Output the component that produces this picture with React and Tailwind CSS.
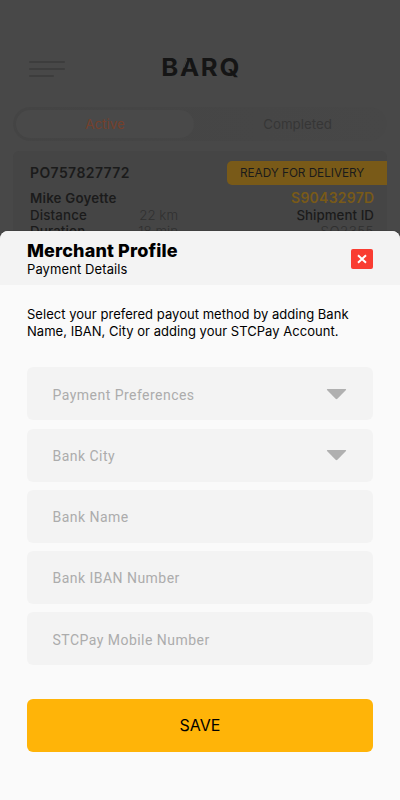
import React, { useState } from 'react';

const campos = [
  { id: 'preferences', label: 'Payment Preferences', select: true },
  { id: 'city', label: 'Bank City', select: true },
  { id: 'bank', label: 'Bank Name' },
  { id: 'iban', label: 'Bank IBAN Number' },
  { id: 'stcpay', label: 'STCPay Mobile Number' },
];

const Orders = () => (
  <div className="h-[231px] overflow-hidden bg-[#484848] text-[#1b1b1b]">
    {/* Top bar */}
    <div className="h-[107px] pt-[55px] flex items-start">
      <div className="w-[157px] pl-[29px] pt-[6px]">
        <div className="w-9 h-[2px] bg-[#3d3d3d] rounded-full"></div>
        <div className="w-9 h-[2px] mt-[5px] bg-[#3d3d3d] rounded-full"></div>
        <div className="w-[25px] h-[2px] mt-[5px] bg-[#3d3d3d] rounded-full"></div>
      </div>
      <h1 className="relative pl-[4px] text-[24px] leading-[26px] font-bold tracking-[1.6px] text-[#151515] origin-left scale-x-[1.07]">
        BARQ
        {/* stencil cut on the left leg of the A */}
        <span className="absolute left-[26px] top-[4px] w-[1.3px] h-[9px] bg-[#484848] rotate-[20deg]"></span>
      </h1>
    </div>

    {/* Tabs */}
    <div className="mx-[13px] h-[34px] rounded-full bg-linear-to-r from-[#444444] to-[#474747] flex items-center p-[3px]">
      <div className="w-[178px] h-7 rounded-full bg-[#494949] flex items-center justify-center pt-[2px] text-[13.3px] text-[#75402b]">Active</div>
      <div className="flex-1 pl-[17px] pt-[2px] text-center text-[13.3px] text-[#363636]">Completed</div>
    </div>

    {/* Shipment card */}
    <div className="mx-[13px] mt-[10px] h-[100px] rounded-md bg-[#454545] pt-[10px] pl-[17px]">
      <div className="flex items-center justify-between">
        <span className="pb-[2px] text-[14px] font-semibold tracking-[0.4px]">PO757827772</span>
        <span className="w-[160.5px] h-6 rounded-l-[5px] bg-[#795a18] flex items-center pl-[13.5px] pt-px text-[11.8px] tracking-[-0.05px]">READY FOR DELIVERY</span>
      </div>
      <div className="mt-[5px] pr-[13px] flex justify-between text-[13.3px] leading-[16.7px]">
        <div className="w-[148px]">
          <p className="font-semibold tracking-[0.2px]">Mike Goyette</p>
          <p className="flex justify-between font-medium tracking-[0.15px]">Distance <span className="font-light tracking-normal text-[#303030]">22 km</span></p>
          <p className="flex justify-between font-medium tracking-[0.15px]">Duration <span className="font-light tracking-normal text-[#303030]">18 min</span></p>
        </div>
        <div className="text-right">
          <p className="font-semibold text-[14px] tracking-[0.25px] -mr-[0.4px] text-[#795a18]">S9043297D</p>
          <p className="font-medium tracking-[0.05px]">Shipment ID</p>
          <p className="font-light tracking-[0.5px] text-[#303030]">SO2355</p>
        </div>
      </div>
    </div>
  </div>
);

const App = () => {
  const [valores, setValores] = useState({});

  return (
    <div className="w-[400px] h-[800px] overflow-hidden bg-[#484848] font-['Inter',sans-serif]">
      <Orders />

      <div className="relative h-[569px] rounded-t-lg overflow-hidden bg-[#fafafa] text-black shadow-[0_0_1px_#1c1c1c]">
        <div className="h-[54px] bg-[#f3f3f3] pl-[27px] pr-[27px] pt-[9px] flex justify-between">
          <div>
            <h2 className="text-[18px] leading-[22px] font-extrabold tracking-[0.14px]">Merchant Profile</h2>
            <p className="text-[13px] leading-[15px] tracking-[0.1px]">Payment Details</p>
          </div>
          <button aria-label="Close" className="mt-[9px] w-[22px] h-5 rounded-[2px] bg-[#f93c31] flex items-center justify-center">
            <svg width="10" height="10" viewBox="0 0 10 10" fill="none" stroke="white" strokeWidth="2">
              <path d="M1 1.3 9 8.7M9 1.3 1 8.7" />
            </svg>
          </button>
        </div>

        <div className="px-[27px]">
          <p className="mt-[21px] text-[13px] leading-[17px] tracking-[0.03px] whitespace-nowrap">
            Select your prefered payout method by adding Bank<br />
            Name, IBAN, City or adding your STCPay Account.
          </p>

          <form className="mt-[27.4px] font-['Roboto',sans-serif]" onSubmit={(e) => e.preventDefault()}>
            <div className="flex flex-col gap-[8.2px]">
              {campos.map((campo) => (
                <label key={campo.id} className="h-[53px] rounded-md bg-[#f3f3f3] pl-[25.5px] pr-[26.5px] flex items-center">
                  <input
                    type="text" placeholder={campo.label} readOnly={campo.select}
                    className="flex-1 min-w-0 pt-[3px] text-[14px] tracking-[0.47px] bg-transparent outline-none placeholder:text-[#acacac]"
                    value={valores[campo.id] || ''}
                    onChange={(e) => setValores({ ...valores, [campo.id]: e.target.value })}
                  />
                  {campo.select && (
                    <svg className="mt-px" width="21" height="11" viewBox="0 0 21 11" fill="#b0b0b0">
                      <path d="M1.5 0h18q1 0 .5 1L11.4 9.8q-.9.8-1.8 0L1 1Q.5 0 1.5 0Z" />
                    </svg>
                  )}
                </label>
              ))}
            </div>

            <button type="submit" className="mt-[33.4px] w-full h-[53px] rounded-md bg-[#ffb408] font-['Inter',sans-serif] text-[16px]">
              SAVE
            </button>
          </form>
        </div>
      </div>
    </div>
  );
};

export default App;
